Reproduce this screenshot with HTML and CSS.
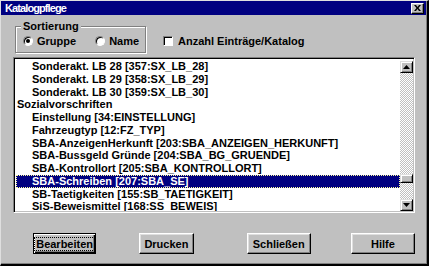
FILE: index.html
```html
<!DOCTYPE html>
<html>
<head>
<meta charset="utf-8">
<link rel="stylesheet" href="styles.css">
</head>
<body>
<div class="window">
  <div class="titlebar">
    <span class="title">Katalogpflege</span>
    <span class="close"><svg width="7" height="6" viewBox="0 0 7 6"><path d="M0 0h2l1.5 2 1.5-2h2L4.5 3 7 6H5L3.5 4 2 6H0l2.5-3z" fill="#000"/></svg></span>
  </div>
  <div class="content">
    <div class="toprow">
      <div class="group">
        <span class="legend">Sortierung</span>
        <div class="radio on"><span class="dot"></span>Gruppe</div>
        <div class="radio second"><span class="dot"></span>Name</div>
      </div>
      <div class="check"><span class="box"></span>Anzahl Einträge/Katalog</div>
    </div>
    <div class="listbox">
      <ul class="items">
        <li class="sub">Sonderakt. LB 28 [357:SX_LB_28]</li>
        <li class="sub">Sonderakt. LB 29 [358:SX_LB_29]</li>
        <li class="sub">Sonderakt. LB 30 [359:SX_LB_30]</li>
        <li class="top">Sozialvorschriften</li>
        <li class="sub">Einstellung [34:EINSTELLUNG]</li>
        <li class="sub">Fahrzeugtyp [12:FZ_TYP]</li>
        <li class="sub">SBA-AnzeigenHerkunft [203:SBA_ANZEIGEN_HERKUNFT]</li>
        <li class="sub">SBA-Bussgeld Gründe [204:SBA_BG_GRUENDE]</li>
        <li class="sub">SBA-Kontrollort [205:SBA_KONTROLLORT]</li>
        <li class="sub sel">SBA-Schreiben [207:SBA_SE]</li>
        <li class="sub">SB-Taetigkeiten [155:SB_TAETIGKEIT]</li>
        <li class="sub">SiS-Beweismittel [168:SS_BEWEIS]</li>
      </ul>
      <div class="scrollbar">
        <div class="arrow"><svg width="7" height="4" viewBox="0 0 7 4"><path d="M3.5 0L7 4H0z" fill="#000"/></svg></div>
        <div class="track"><div class="thumb" style="margin-top:101px"></div></div>
        <div class="arrow"><svg width="7" height="4" viewBox="0 0 7 4"><path d="M0 0h7L3.5 4z" fill="#000"/></svg></div>
      </div>
    </div>
    <div class="buttons">
      <div class="btn default b1"><span class="focus">Bearbeiten</span></div>
      <div class="btn b2">Drucken</div>
      <div class="btn b3">Schließen</div>
      <div class="btn b4">Hilfe</div>
    </div>
  </div>
</div>
</body>
</html>
```
FILE: styles.css
```css
* { box-sizing: border-box; margin: 0; padding: 0; }
html, body { width: 429px; height: 266px; overflow: hidden; background: #c0c0c0; }
body { font: bold 11px "Liberation Sans", Arial, sans-serif; color: #000; }

.window {
  width: 429px; height: 266px;
  background: #c0c0c0;
  border-top: 1px solid #dfdfdf;
  border-left: 1px solid #dfdfdf;
  border-right: 2px solid #000;
  border-bottom: 2px solid #000;
  box-shadow: inset -1px -1px #808080;
  display: flex; flex-direction: column;
}

.titlebar {
  height: 14px;
  margin-right: 1px;
  background: #000080;
  color: #fff;
  display: flex; align-items: center; justify-content: space-between;
  padding: 0 2px 0 4px;
}
.title { letter-spacing: -0.9px; }
.close {
  width: 13px; height: 11px;
  background: #c0c0c0;
  border: 1px solid; border-color: #fff #000 #000 #fff;
  box-shadow: inset -1px -1px #808080;
  display: flex; align-items: center; justify-content: center;
}

.content { flex: 1; padding: 11px 12px 0 12px; display: flex; flex-direction: column; }

.toprow { display: flex; align-items: flex-start; height: 27px; }
.group {
  position: relative;
  margin-left: 2px;
  width: 131px; height: 27px;
  border: 1px solid #808080;
  box-shadow: inset 1px 1px #fff, 1px 1px #fff;
  display: flex; align-items: center;
  padding: 3px 0 0 7px;
}
.legend {
  position: absolute; left: 5px; top: -7px;
  background: #c0c0c0; padding: 0 2px; line-height: 12px;
}
.radio { display: flex; align-items: center; }
.radio.second { margin-left: 19px; }
.dot {
  width: 10px; height: 10px; border-radius: 50%;
  background: #fff;
  border: 1px solid; border-color: #808080 #fff #fff #808080;
  box-shadow: inset 1px 1px #000;
  margin-right: 4px;
  display: flex; align-items: center; justify-content: center;
}
.radio.on .dot::after { content: ""; width: 4px; height: 4px; border-radius: 50%; background: #000; }

.check { display: flex; align-items: center; margin: 9px 0 0 17px; }
.box {
  width: 10px; height: 10px; background: #fff;
  border: 1px solid; border-color: #808080 #fff #fff #808080;
  box-shadow: inset 1px 1px #000;
  margin-right: 5px;
}

.listbox {
  margin-top: 4px;
  height: 156px;
  display: flex;
  background: #fff;
  border: 1px solid; border-color: #808080 #fff #fff #808080;
  box-shadow: inset 1px 1px #000, inset -1px -1px #c0c0c0;
  padding: 2px 1px 1px 2px;
}
.items { flex: 1; list-style: none; overflow: hidden; }
.items li { height: 12.75px; line-height: 12.75px; white-space: nowrap; }
.items .top { padding-left: 1px; }
.items .sub { padding-left: 16px; }
.items .sel {
  background: #000080; color: #fff;
  border: 1px dotted #ffff9c;
  line-height: 10.75px;
  padding-left: 15px;
}

.scrollbar { width: 13px; display: flex; flex-direction: column; margin-top: 1px; }
.arrow {
  width: 13px; height: 12px; background: #c0c0c0;
  border: 1px solid; border-color: #dfdfdf #000 #000 #dfdfdf;
  box-shadow: inset 1px 1px #fff, inset -1px -1px #808080;
  display: flex; align-items: center; justify-content: center;
}
.track {
  flex: 1;
  background: repeating-conic-gradient(#fff 0 25%, #c0c0c0 0 50%) 0 0 / 2px 2px;
}
.thumb {
  width: 13px; height: 9px; background: #c0c0c0;
  border: 1px solid; border-color: #dfdfdf #000 #000 #dfdfdf;
  box-shadow: inset 1px 1px #fff, inset -1px -1px #808080;
}

.buttons { display: flex; margin-top: 20px; padding-left: 20px; }
.btn {
  height: 21px;
  display: flex; align-items: center; justify-content: center;
  background: #c0c0c0;
  border: 1px solid; border-color: #fff #000 #000 #fff;
  box-shadow: inset -1px -1px #808080, inset 1px 1px #dfdfdf;
}
.btn.default { border: 1px solid #000; box-shadow: inset 1px 1px #fff, inset -1px -1px #000, inset -2px -2px #808080; }
.focus { outline: 1px dotted #000; outline-offset: 0; padding: 0 1px; line-height: 12px; }
.b1 { width: 64px; }
.b2 { width: 55px; margin-left: 43px; }
.b3 { width: 65px; margin-left: 53px; }
.b4 { width: 65px; margin-left: 40px; }
```
